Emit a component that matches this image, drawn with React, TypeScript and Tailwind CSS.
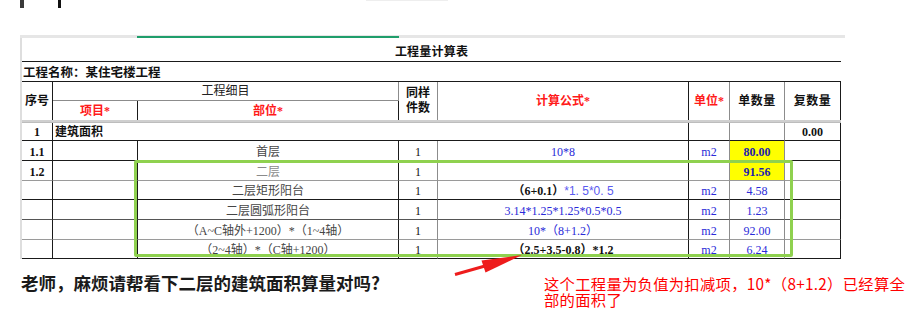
import React from "react";

const F = "font-['Liberation_Serif','Noto_Sans_CJK_SC',serif]";
const BK = "border-[#1a1a1a]";
const GR = "border-[#8c8c8c]";
const BLUE = "text-[#2a2ad8]";

type Row = {
  no: string;
  part: string;
  partCls?: string;
  n: string;
  formula: React.ReactNode;
  unit: string;
  q: string;
  qCls: string;
  yellow?: boolean;
  h: string;
  bottom: string;
};

const rows: Row[] = [
  {
    no: "1.1",
    part: "首层",
    n: "1",
    formula: <span className={BLUE}>10*8</span>,
    unit: "m2",
    q: "80.00",
    qCls: "font-bold text-[#1c1cb0]",
    yellow: true,
    h: "h-[20px]",
    bottom: "border-b-[#1a1a1a]",
  },
  {
    no: "1.2",
    part: "二层",
    partCls: "text-[#8a8a8a]",
    n: "1",
    formula: null,
    unit: "",
    q: "91.56",
    qCls: "font-bold text-[#1c1cb0]",
    yellow: true,
    h: "h-[20px]",
    bottom: "border-b-[#9a9a9a]",
  },
  {
    no: "",
    part: "二层矩形阳台",
    n: "1",
    formula: (
      <>
        <span className="font-bold text-[#111]">（6+0.1）</span>
        <span className="font-['Liberation_Sans',sans-serif] text-[#5a5af0]">*1. 5*0. 5</span>
      </>
    ),
    unit: "m2",
    q: "4.58",
    qCls: BLUE,
    h: "h-[19px]",
    bottom: "border-b-[#1a1a1a]",
  },
  {
    no: "",
    part: "二层圆弧形阳台",
    n: "1",
    formula: <span className={BLUE}>3.14*1.25*1.25*0.5*0.5</span>,
    unit: "m2",
    q: "1.23",
    qCls: BLUE,
    h: "h-[20px]",
    bottom: "border-b-[#555555]",
  },
  {
    no: "",
    part: "（A~C轴外+1200）*（1~4轴）",
    n: "1",
    formula: <span className={BLUE}>10*（8+1.2）</span>,
    unit: "m2",
    q: "92.00",
    qCls: BLUE,
    h: "h-[20px]",
    bottom: "border-b-[#9a9a9a]",
  },
  {
    no: "",
    part: "（2~4轴）*（C轴+1200）",
    n: "1",
    formula: <span className="font-bold text-[#111]">（2.5+3.5-0.8）*1.2</span>,
    unit: "m2",
    q: "6.24",
    qCls: BLUE,
    h: "h-[19px]",
    bottom: "border-b-[#1a1a1a]",
  },
];

const COLS = "grid grid-cols-[31px_85px_261px_39px_251px_41px_55px_56px]";
const cellBase = "flex items-end justify-center pb-[1px] leading-[14px] whitespace-nowrap overflow-hidden border-b";

export default function App() {
  return (
    <div className={`relative w-[924px] h-[317px] bg-white overflow-hidden ${F} text-[12px] text-[#111]`}>
      {/* top marks */}
      <div className="h-[35px] flex items-start">
        <div className="ml-[20px] w-[4px] h-[8px] bg-[#3a3a3a]" />
        <div className="ml-[34px] w-[3px] h-[8px] bg-[#111]" />
        <div className="ml-[305px] w-[82px] h-[1px] bg-[#eeeeee]" />
      </div>

      {/* sheet */}
      <div className="ml-[20px] w-[825px] flex flex-col">
        <div className="flex h-[3px] bg-[#e6e6e6]">
          <div className="w-[117px]" />
          <div className="w-[262px] border-t border-[#e6e6e6] bg-[#1f9e6b]" />
        </div>
        <div className="flex">
          <div className="w-[2px] bg-[#dedede]" />
          <div className="w-[819px] flex flex-col">
            {/* title */}
            <div className={`h-[24px] border-b ${BK} flex items-end justify-center pb-[2px] font-bold leading-[14px] tracking-[0.2px]`}>
              工程量计算表
            </div>
            {/* project name */}
            <div className={`h-[20px] border-b ${BK} flex items-end pl-[1px] pb-[1px] font-bold text-[12.5px] leading-[14px]`}>
              工程名称：某住宅楼工程
            </div>
            {/* header */}
            <div className={`${COLS} grid-rows-[19px_19px] font-bold`}>
              <div className={`row-span-2 border-r ${BK} flex items-center justify-center`}>序号</div>
              <div className={`col-span-2 border-r ${BK} border-b ${GR} flex items-center justify-center font-normal text-[#222]`}>
                <span>工程细目</span>
              </div>
              <div className={`row-span-2 border-r ${GR} flex flex-col items-center justify-center leading-[15px]`}>
                <span>同样</span>
                <span>件数</span>
              </div>
              <div className={`row-span-2 border-r ${BK} flex items-center justify-center text-[#ff1a1a]`}>计算公式*</div>
              <div className={`row-span-2 border-r ${GR} flex items-center justify-center text-[#ff1a1a]`}>单位*</div>
              <div className={`row-span-2 border-r ${GR} flex items-center justify-center tracking-[0.5px]`}>单数量</div>
              <div className={`row-span-2 border-r ${BK} flex items-center justify-center tracking-[0.5px]`}>复数量</div>
              <div className={`border-r ${BK} flex items-center justify-center text-[#ff1a1a]`}>项目*</div>
              <div className={`border-r ${BK} flex items-center justify-center text-[#ff1a1a]`}>部位*</div>
            </div>
            <div className="h-[3px] bg-[#cfcfcf] border-b border-[#bdbdbd]" />
            {/* row 1 */}
            <div className={`${COLS} h-[18px] font-bold`}>
              <div className={`${cellBase} border-b-[#1a1a1a] border-r ${BK}`}>1</div>
              <div className={`col-span-4 ${cellBase} justify-start! pl-[2px] border-b-[#1a1a1a] border-r ${BK}`}>建筑面积</div>
              <div className={`${cellBase} border-b-[#1a1a1a] border-r ${GR}`} />
              <div className={`${cellBase} border-b-[#1a1a1a] border-r ${GR}`} />
              <div className={`${cellBase} border-b-[#1a1a1a] border-r ${BK}`}>0.00</div>
            </div>
            {rows.map((r, i) => (
              <div key={i} className={`${COLS} ${r.h}`}>
                <div className={`${cellBase} ${r.bottom} border-r border-r-[#1a1a1a] font-bold`}>{r.no}</div>
                <div className={`${cellBase} ${r.bottom} border-r border-r-[#1a1a1a]`} />
                <div className={`${cellBase} ${r.bottom} border-r border-r-[#1a1a1a] ${r.partCls ?? "text-[#454545]"}`}>{r.part}</div>
                <div className={`${cellBase} ${r.bottom} border-r border-r-[#8c8c8c]`}>{r.n}</div>
                <div className={`${cellBase} ${r.bottom} border-r border-r-[#1a1a1a]`}>{r.formula}</div>
                <div className={`${cellBase} ${r.bottom} border-r border-r-[#8c8c8c] ${BLUE}`}>{r.unit}</div>
                <div className={`${cellBase} ${r.bottom} border-r border-r-[#8c8c8c] ${r.yellow ? "bg-[#ffff00]" : ""} ${r.qCls}`}>{r.q}</div>
                <div className={`${cellBase} ${r.bottom} border-r border-r-[#1a1a1a]`} />
              </div>
            ))}
          </div>
        </div>
      </div>

      {/* bottom texts */}
      <div className="flex items-start">
        <div className="ml-[21px] mt-[12px] w-[523px] text-[17.5px] leading-[24px] font-bold text-[#1a1a1a] font-['Noto_Sans_CJK_SC',sans-serif] whitespace-nowrap">
          老师，麻烦请帮看下二层的建筑面积算量对吗?
        </div>
        <div className="mt-[16px] flex flex-col text-[15.3px] leading-[16px] tracking-[0.3px] text-[#ff0000] font-['Noto_Sans_CJK_SC',sans-serif] whitespace-nowrap">
          <span className="h-[16px]">这个工程量为负值为扣减项，10*（8+1.2）已经算全</span>
          <span className="h-[16px]">部的面积了</span>
        </div>
      </div>

      {/* green highlight box */}
      <div className="absolute left-[134px] top-[160px] w-[659px] h-[97px] border-[3px] border-[#8fd14f] rounded-[2px]" />

      {/* red arrow */}
      <svg className="absolute left-[450px] top-[248px]" width="80" height="30" viewBox="450 248 80 30">
        <line x1="455" y1="274.5" x2="485" y2="266" stroke="#ee1c1c" strokeWidth="3" />
        <polygon points="522,255 481.5,260.5 485.5,272.5" fill="#ee1c1c" />
      </svg>
    </div>
  );
}
